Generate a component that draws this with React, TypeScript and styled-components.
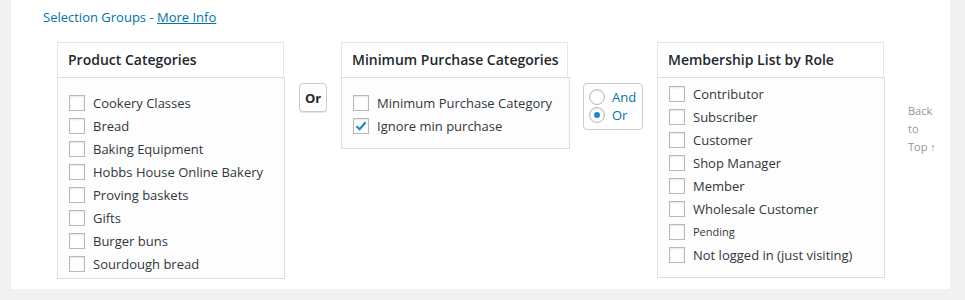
import styled, { createGlobalStyle } from 'styled-components';

const GlobalStyle = createGlobalStyle`
  html, body {
    margin: 0;
    padding: 0;
    background: #f1f1f1;
    font-family: "Open Sans", "Liberation Sans", sans-serif;
    color: #444;
  }
`;

const Panel = styled.div`
  margin-left: 11px;
  width: 939px;
  height: 289px;
  box-sizing: border-box;
  background: #fff;
  box-shadow: 0 1px 1px rgba(0, 0, 0, 0.06);
  padding: 8px 0 0 32px;
`;

const Title = styled.div`
  font-size: 13px;
  line-height: 18px;
  color: #0073aa;

  a {
    color: #0073aa;
    text-decoration: underline;
  }
`;

const Groups = styled.div`
  display: flex;
  align-items: flex-start;
  margin: 16px 0 0 14px;
`;

const Group = styled.div<{ $width: number }>`
  width: ${({ $width }) => $width}px;
  flex: none;
`;

const Tab = styled.div`
  width: 227px;
  height: 35px;
  box-sizing: border-box;
  border: 1px solid #e5e5e5;
  border-bottom: none;
  padding-left: 10px;
  font-size: 14px;
  font-weight: 600;
  line-height: 34px;
  color: #23282d;
  white-space: nowrap;
`;

const TabPanel = styled.div<{ $top: number }>`
  box-sizing: border-box;
  max-height: 202px;
  overflow: hidden;
  border: 1px solid #ddd;
  background: #fdfdfd;
  padding: ${({ $top }) => $top}px 11px 11px;
`;

const Row = styled.label<{ $small?: boolean }>`
  display: flex;
  align-items: center;
  gap: 8px;
  height: 23px;
  font-size: ${({ $small }) => ($small ? '11px' : '13px')};
  color: #32373c;
  white-space: nowrap;
`;

const Box = styled.span`
  width: 16px;
  height: 16px;
  box-sizing: border-box;
  flex: none;
  border: 1px solid #b4b9be;
  background: #fff;
  box-shadow: inset 0 1px 2px rgba(0, 0, 0, 0.1);
  display: flex;
  align-items: center;
  justify-content: center;
`;

const Joiner = styled.div<{ $gapLeft: number }>`
  margin: 41px 14px 0 ${({ $gapLeft }) => $gapLeft}px;
  flex: none;
`;

const OrButton = styled.div`
  width: 28px;
  height: 29px;
  box-sizing: border-box;
  border: 1px solid #ccc;
  border-radius: 4px;
  background: #fff;
  box-shadow: 0 1px 0 #e5e5e5;
  display: flex;
  align-items: center;
  justify-content: center;
  font-size: 13px;
  font-weight: 700;
  color: #23282d;
`;

const RadioBox = styled.div`
  width: 60px;
  height: 47px;
  box-sizing: border-box;
  border: 1px solid #ccc;
  border-radius: 4px;
  padding: 4px 0 0 5px;
`;

const RadioRow = styled.label`
  display: flex;
  align-items: center;
  gap: 7px;
  height: 18px;
  font-size: 13px;
  color: #0073aa;
`;

const Radio = styled.span<{ $on?: boolean }>`
  width: 16px;
  height: 16px;
  box-sizing: border-box;
  flex: none;
  border: 1px solid #b4b9be;
  border-radius: 50%;
  background: #fff;
  box-shadow: inset 0 1px 2px rgba(0, 0, 0, 0.1);
  display: flex;
  align-items: center;
  justify-content: center;

  &::after {
    content: '';
    display: ${({ $on }) => ($on ? 'block' : 'none')};
    width: 6px;
    height: 6px;
    border-radius: 50%;
    background: #1e8cbe;
  }
`;

const BackTop = styled.div`
  width: 32px;
  margin: 60px 0 0 23px;
  font-size: 11px;
  line-height: 18px;
  color: #8f959a;
`;

function Check({ label, checked, small }: { label: string; checked?: boolean; small?: boolean }) {
  return (
    <Row $small={small}>
      <Box>
        {checked && (
          <svg width="14" height="14" viewBox="0 0 14 14">
            <path d="M2.5 7.2 L5.6 10.2 L11.6 3.2" fill="none" stroke="#1e8cbe" strokeWidth="2.2" />
          </svg>
        )}
      </Box>
      {label}
    </Row>
  );
}

const products = [
  'Cookery Classes',
  'Bread',
  'Baking Equipment',
  'Hobbs House Online Bakery',
  'Proving baskets',
  'Gifts',
  'Burger buns',
  'Sourdough bread',
];

const roles = [
  'Contributor',
  'Subscriber',
  'Customer',
  'Shop Manager',
  'Member',
  'Wholesale Customer',
  'Pending',
  'Not logged in (just visiting)',
];

export default function App() {
  return (
    <>
      <GlobalStyle />
      <Panel>
        <Title>
          Selection Groups - <a href="#">More Info</a>
        </Title>
        <Groups>
          <Group $width={228}>
            <Tab>Product Categories</Tab>
            <TabPanel $top={13}>
              {products.map((p) => (
                <Check key={p} label={p} />
              ))}
            </TabPanel>
          </Group>
          <Joiner $gapLeft={14}>
            <OrButton>Or</OrButton>
          </Joiner>
          <Group $width={229}>
            <Tab>Minimum Purchase Categories</Tab>
            <TabPanel $top={13}>
              <Check label="Minimum Purchase Category" />
              <Check label="Ignore min purchase" checked />
            </TabPanel>
          </Group>
          <Joiner $gapLeft={13}>
            <RadioBox>
              <RadioRow>
                <Radio />
                And
              </RadioRow>
              <RadioRow>
                <Radio $on />
                Or
              </RadioRow>
            </RadioBox>
          </Joiner>
          <Group $width={228}>
            <Tab>Membership List by Role</Tab>
            <TabPanel $top={4}>
              {roles.map((r) => (
                <Check key={r} label={r} small={r === 'Pending'} />
              ))}
            </TabPanel>
          </Group>
          <BackTop>Back to Top ↑</BackTop>
        </Groups>
      </Panel>
    </>
  );
}
